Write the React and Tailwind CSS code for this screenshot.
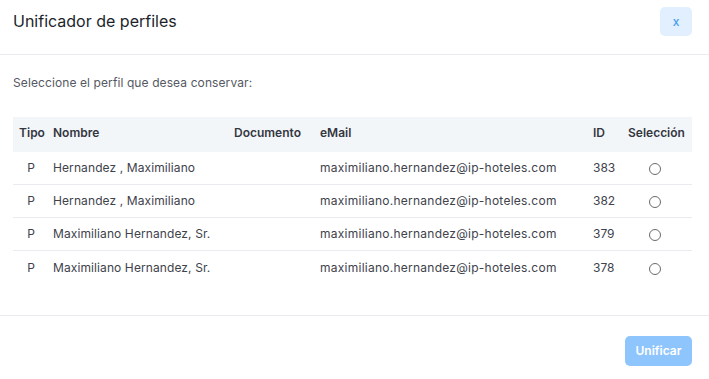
import React from "react";

const rows = [
  { tipo: "P", nombre: "Hernandez , Maximiliano", doc: "", email: "maximiliano.hernandez@ip-hoteles.com", id: "383" },
  { tipo: "P", nombre: "Hernandez , Maximiliano", doc: "", email: "maximiliano.hernandez@ip-hoteles.com", id: "382" },
  { tipo: "P", nombre: "Maximiliano Hernandez, Sr.", doc: "", email: "maximiliano.hernandez@ip-hoteles.com", id: "379" },
  { tipo: "P", nombre: "Maximiliano Hernandez, Sr.", doc: "", email: "maximiliano.hernandez@ip-hoteles.com", id: "378" },
];

const cols = "grid grid-cols-[34px_181px_86px_273px_35px_70px]";

export default function App() {
  return (
    <div className="w-[709px] h-[379px] bg-white flex flex-col" style={{ fontFamily: "Inter, 'Noto Sans', sans-serif" }}>
      <div className="flex items-start justify-between pl-[13px] pr-[17px] pt-[7px] h-[55px] border-b border-[#ebebef]">
        <div className="text-[16px] leading-[29px] text-[#1d1f2c]">Unificador de perfiles</div>
        <button className="w-[32px] h-[29px] rounded-[5px] bg-[#e1efff] text-[#4a9ef5] text-[12px] font-medium leading-none flex items-center justify-center">x</button>
      </div>
      <div className="flex-1 px-[13px] pt-[20px]">
        <div className="text-[12px] leading-[16px] text-[#555862] tracking-[0.1px]">Seleccione el perfil que desea conservar:</div>
        <div className="mt-[26px] w-[679px]">
          <div className={`${cols} h-[35px] items-center pb-[3px] bg-[#f3f6f9] text-[12px] font-semibold text-[#343642]`}>
            <div className="text-center pl-[4px]">Tipo</div>
            <div className="px-[6px]">Nombre</div>
            <div className="px-[6px]">Documento</div>
            <div className="px-[6px]">eMail</div>
            <div className="px-[6px]">ID</div>
            <div className="px-[6px]">Selección</div>
          </div>
          {rows.map((r, i) => (
            <div
              key={i}
              className={`${cols} h-[33px] items-center text-[12px] text-[#40424c] ${i < rows.length - 1 ? "border-b border-[#ebebef]" : ""}`}
            >
              <div className="text-center pl-[2px]">{r.tipo}</div>
              <div className="px-[6px] whitespace-nowrap tracking-[0.1px]">{r.nombre}</div>
              <div className="px-[6px]">{r.doc}</div>
              <div className="px-[6px] whitespace-nowrap tracking-[0.25px]">{r.email}</div>
              <div className="px-[6px]">{r.id}</div>
              <div className="flex justify-center pr-[4px]">
                <span className="block w-[12px] h-[12px] rounded-full border border-[#6b6b6b] bg-white mt-[2px]"></span>
              </div>
            </div>
          ))}
        </div>
      </div>
      <div className="h-[64px] border-t border-[#ebebef] flex items-start justify-end pr-[17px] pt-[20px]">
        <button className="w-[67px] h-[30px] rounded-[5px] bg-[#8ec5fd] text-white text-[12px] font-semibold">Unificar</button>
      </div>
    </div>
  );
}
